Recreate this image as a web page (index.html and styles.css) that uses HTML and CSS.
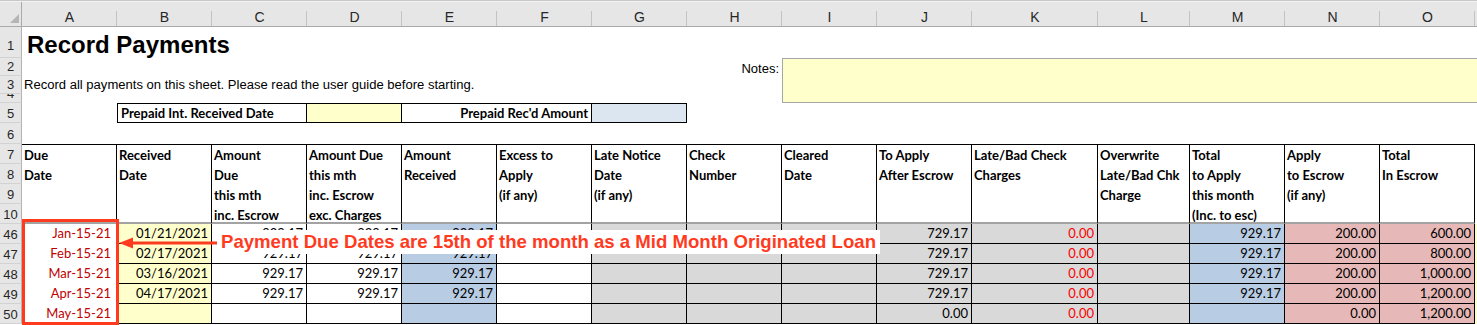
FILE: index.html
```html
<!DOCTYPE html>
<html>
<head>
<meta charset="utf-8">
<link rel="stylesheet" href="styles.css">
</head>
<body>
<div class="sheet">
  <!-- column headers -->
  <div class="ch corner"><svg class="tri" width="9" height="9" viewBox="0 0 9 9"><polygon points="9,0 9,9 0,9" fill="#b5b5b5"/></svg></div>
  <div class="ch">A</div><div class="ch">B</div><div class="ch">C</div><div class="ch">D</div><div class="ch">E</div>
  <div class="ch">F</div><div class="ch">G</div><div class="ch">H</div><div class="ch">I</div><div class="ch">J</div>
  <div class="ch">K</div><div class="ch">L</div><div class="ch">M</div><div class="ch">N</div><div class="ch">O</div>
  <div class="ch chend"></div>

  <!-- row 1 -->
  <div class="rh r1">1</div>
  <div class="title s16">Record Payments</div>

  <!-- row 2 -->
  <div class="rh">2</div>
  <div class="s7"></div>
  <div class="noteslabel">Notes:</div>
  <div class="notesbox s8 rs3"></div>

  <!-- row 3 -->
  <div class="rh">3</div>
  <div class="intro s7">Record all payments on this sheet. Please read the user guide before starting.</div>
  <div></div>

  <!-- row 4 -->
  <div class="rh">4</div>
  <div class="s8"></div>

  <!-- row 5 -->
  <div class="rh">5</div>
  <div></div>
  <div class="box lbl s2 first">Prepaid Int. Received Date</div>
  <div class="box y"></div>
  <div class="box lbl s2 right">Prepaid Rec'd Amount</div>
  <div class="box lb"></div>
  <div class="s9"></div>

  <!-- row 6 -->
  <div class="rh">6</div>
  <div class="s16"></div>

  <!-- rows 7-10 header -->
  <div class="rh">7</div>
  <div class="hd rs4">Due<br>Date</div>
  <div class="hd rs4">Received<br>Date</div>
  <div class="hd rs4">Amount<br>Due<br>this mth<br>inc. Escrow</div>
  <div class="hd rs4">Amount Due<br>this mth<br>inc. Escrow<br>exc. Charges</div>
  <div class="hd rs4">Amount<br>Received</div>
  <div class="hd rs4">Excess to<br>Apply<br>(if any)</div>
  <div class="hd rs4">Late Notice<br>Date<br>(if any)</div>
  <div class="hd rs4">Check<br>Number</div>
  <div class="hd rs4">Cleared<br>Date</div>
  <div class="hd rs4">To Apply<br>After Escrow</div>
  <div class="hd rs4">Late/Bad Check<br>Charges</div>
  <div class="hd rs4">Overwrite<br>Late/Bad Chk<br>Charge</div>
  <div class="hd rs4">Total<br>to Apply<br>this month<br>(Inc. to esc)</div>
  <div class="hd rs4">Apply<br>to Escrow<br>(if any)</div>
  <div class="hd rs4">Total<br>In Escrow</div>
  <div class="rs4"></div>
  <div class="rh">8</div>
  <div class="rh">9</div>
  <div class="rh">10</div>

  <!-- row 46 -->
  <div class="rh">46</div>
  <div class="d a">Jan-15-21</div>
  <div class="d y">01/21/2021</div>
  <div class="d">929.17</div>
  <div class="d">929.17</div>
  <div class="d b">929.17</div>
  <div class="d"></div>
  <div class="d g"></div><div class="d g"></div><div class="d g"></div>
  <div class="d g">729.17</div>
  <div class="d g red">0.00</div>
  <div class="d g"></div>
  <div class="d b">929.17</div>
  <div class="d p">200.00</div>
  <div class="d p">600.00</div>
  <div class="end"></div>

  <!-- row 47 -->
  <div class="rh">47</div>
  <div class="d a">Feb-15-21</div>
  <div class="d y">02/17/2021</div>
  <div class="d">929.17</div>
  <div class="d">929.17</div>
  <div class="d b">929.17</div>
  <div class="d"></div>
  <div class="d g"></div><div class="d g"></div><div class="d g"></div>
  <div class="d g">729.17</div>
  <div class="d g red">0.00</div>
  <div class="d g"></div>
  <div class="d b">929.17</div>
  <div class="d p">200.00</div>
  <div class="d p">800.00</div>
  <div class="end"></div>

  <!-- row 48 -->
  <div class="rh">48</div>
  <div class="d a">Mar-15-21</div>
  <div class="d y">03/16/2021</div>
  <div class="d">929.17</div>
  <div class="d">929.17</div>
  <div class="d b">929.17</div>
  <div class="d"></div>
  <div class="d g"></div><div class="d g"></div><div class="d g"></div>
  <div class="d g">729.17</div>
  <div class="d g red">0.00</div>
  <div class="d g"></div>
  <div class="d b">929.17</div>
  <div class="d p">200.00</div>
  <div class="d p">1,000.00</div>
  <div class="end"></div>

  <!-- row 49 -->
  <div class="rh">49</div>
  <div class="d a">Apr-15-21</div>
  <div class="d y">04/17/2021</div>
  <div class="d">929.17</div>
  <div class="d">929.17</div>
  <div class="d b">929.17</div>
  <div class="d"></div>
  <div class="d g"></div><div class="d g"></div><div class="d g"></div>
  <div class="d g">729.17</div>
  <div class="d g red">0.00</div>
  <div class="d g"></div>
  <div class="d b">929.17</div>
  <div class="d p">200.00</div>
  <div class="d p">1,200.00</div>
  <div class="end"></div>

  <!-- row 50 -->
  <div class="rh">50</div>
  <div class="d a">May-15-21</div>
  <div class="d y"></div>
  <div class="d"></div>
  <div class="d"></div>
  <div class="d b"></div>
  <div class="d"></div>
  <div class="d g"></div><div class="d g"></div><div class="d g"></div>
  <div class="d g">0.00</div>
  <div class="d g red">0.00</div>
  <div class="d g"></div>
  <div class="d b"></div>
  <div class="d p">0.00</div>
  <div class="d p">1,200.00</div>
  <div class="end"></div>

  <!-- annotation overlay -->
  <div class="redbox"></div>
  <svg class="arrow" width="100" height="14" viewBox="0 0 100 14">
    <line x1="12" y1="7" x2="100" y2="7" stroke="#ff3b1f" stroke-width="3"/>
    <polygon points="0,7 14,1.5 14,12.5" fill="#ff3b1f"/>
  </svg>
  <div class="callout">Payment Due Dates are 15th of the month as a Mid Month Originated Loan</div>
</div>
</body>
</html>
```
FILE: styles.css
```css
html, body {
  margin: 0;
  padding: 0;
  background: #ffffff;
}

.sheet {
  position: relative;
  display: grid;
  grid-template-columns: 22px repeat(10, 95px) 126px 92px repeat(3, 95px) 2px;
  grid-template-rows: 27px 31px 18px 18px 9px 20px 21px repeat(4, 20px) repeat(5, 20px);
  width: 1477px;
  height: 325px;
  overflow: hidden;
  font-family: Lato, "Liberation Sans", sans-serif;
  font-size: 13px;
  color: #000;
}

.sheet > div {
  box-sizing: border-box;
  min-width: 0;
}

/* spans */
.s2 { grid-column: span 2; }
.s7 { grid-column: span 7; }
.s8 { grid-column: span 8; }
.s9 { grid-column: span 9; }
.s16 { grid-column: span 16; }
.rs3 { grid-row: span 3; }
.rs4 { grid-row: span 4; }

/* column header band */
.ch {
  background-color: #e6e6e6;
  background-image: linear-gradient(#c3c3c3, #c3c3c3);
  background-repeat: no-repeat;
  background-position: right bottom;
  background-size: 1px 15px;
  border-top: 1px solid #c8c8c8;
  box-shadow: inset 0 1px 0 #f2f2f2;
  border-bottom: 1px solid #a9a9a9;
  font-family: "Liberation Sans", Arial, sans-serif;
  font-size: 14px;
  color: #262626;
  text-align: center;
  line-height: 15px;
  padding-top: 9px;
}
.corner {
  display: flex;
  justify-content: flex-end;
  align-items: flex-end;
  padding: 0 3px 3px 0;
  background-image: linear-gradient(#a9a9a9, #a9a9a9);
  background-size: 1px 100%;
}
.tri { display: block; }
.chend { background-image: none; }

/* row headers */
.rh {
  background: #e6e6e6;
  border-right: 1px solid #b3b3b3;
  border-bottom: 1px solid #d2d2d2;
  font-family: "Liberation Sans", Arial, sans-serif;
  font-size: 13px;
  color: #262626;
  display: flex;
  align-items: flex-end;
  justify-content: center;
  line-height: 15px;
  padding-bottom: 1px;
  overflow: hidden;
}
.r1 { padding-bottom: 4px; }

/* top area */
.title {
  font-family: "Liberation Sans", Arial, sans-serif;
  font-weight: bold;
  font-size: 24px;
  line-height: 27px;
  padding: 4px 0 0 5px;
  white-space: nowrap;
}
.intro {
  font-family: "Liberation Sans", Arial, sans-serif;
  font-size: 13.05px;
  line-height: 18px;
  padding: 0 0 0 2px;
  white-space: nowrap;
  overflow: visible;
}
.noteslabel {
  font-family: "Liberation Sans", Arial, sans-serif;
  font-size: 13px;
  line-height: 17px;
  text-align: right;
  padding: 2px 3px 0 0;
  white-space: nowrap;
}
.notesbox {
  background: #ffffcc;
  border: 1px solid #a6a6a6;
  border-right: none;
}

/* row 5 box */
.box {
  border-top: 1px solid #000;
  border-bottom: 1px solid #000;
  border-right: 1px solid #000;
  line-height: 18px;
}
.box.first { border-left: 1px solid #000; }
.lbl {
  font-weight: bold;
  white-space: nowrap;
  padding: 0 3px;
}
.lbl.right { text-align: right; }
.lb { background: #dce6f1; }

/* table header rows 7-10 */
.hd {
  border-top: 1px solid #000;
  border-right: 1px solid #000;
  border-bottom: 2px solid #a3a3a3;
  font-weight: bold;
  line-height: 20px;
  padding: 0 0 0 2px;
  white-space: nowrap;
  overflow: hidden;
}

/* data cells */
.d {
  border-right: 1px solid #000;
  border-bottom: 1px solid #000;
  text-align: right;
  line-height: 19px;
  padding: 0 3px 0 2px;
  white-space: nowrap;
  background: #ffffff;
}
.d.a {
  border-bottom: none;
  color: #c00000;
  padding-right: 5px;
}
.y { background: #ffffcc; }
.b { background: #b8cce4; }
.g { background: #d9d9d9; }
.p { background: #e6b8b7; }
.red { color: #ff0000; }
.end { background: #ffffcc; }

/* annotation overlay */
.redbox {
  position: absolute;
  left: 22px;
  top: 219px;
  width: 97px;
  height: 106px;
  border: 3px solid #ff3b1f;
  box-sizing: border-box;
}
.arrow {
  position: absolute;
  left: 119px;
  top: 236px;
}
.callout {
  position: absolute;
  left: 217px;
  top: 230px;
  height: 24px;
  background: #ffffff;
  color: #ff3b1f;
  font-family: "Liberation Sans", Arial, sans-serif;
  font-weight: bold;
  font-size: 18.6px;
  line-height: 24px;
  padding: 0 4px 0 4px;
  white-space: nowrap;
}
```
